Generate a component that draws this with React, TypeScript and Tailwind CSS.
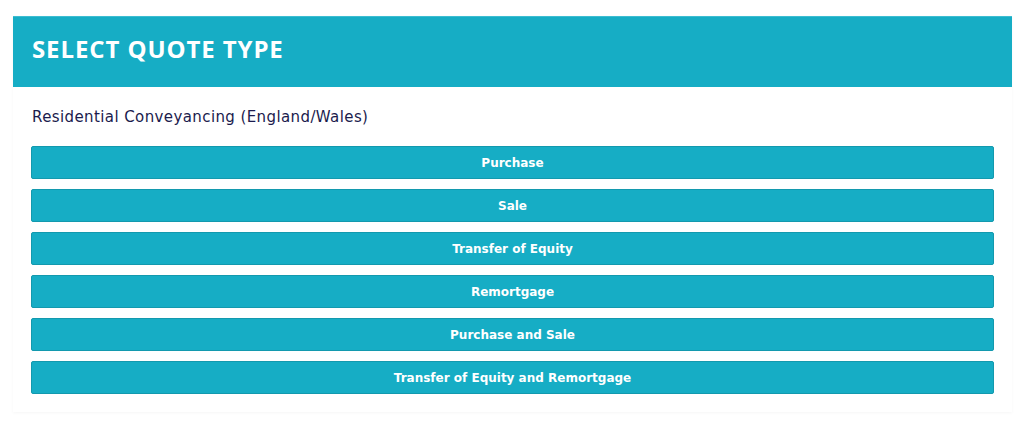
const quoteTypes = [
  'Purchase',
  'Sale',
  'Transfer of Equity',
  'Remortgage',
  'Purchase and Sale',
  'Transfer of Equity and Remortgage',
];

export default function App() {
  return (
    <div className="min-h-[427px] bg-white pt-[16px] px-[12px]">
      <div className="w-[999px] ml-[1px] bg-white shadow-[0_1px_3px_rgba(0,0,0,0.04)]">
        <div className="h-[71px] bg-[#16adc5] border-t border-[#3dbdd1] flex items-center pl-[19px] pb-[6px]">
          <h1 className="text-white text-[24px] font-bold tracking-[0.9px] font-['Open_Sans',sans-serif]">
            SELECT QUOTE TYPE
          </h1>
        </div>
        <div className="px-[18px] pb-[18px]">
          <p className="h-[59px] flex items-center pl-[1px] pt-[2px] text-[15px] tracking-[0.4px] text-[#1b1b4d] font-['DejaVu_Sans',sans-serif]">
            Residential Conveyancing (England/Wales)
          </p>
          <div className="flex flex-col gap-[10px]">
            {quoteTypes.map((label) => (
              <button
                key={label}
                className="h-[33px] w-full bg-[#16adc5] border border-[#1399ae] rounded-[2px] text-white text-[12px] font-bold font-['DejaVu_Sans',sans-serif]"
              >
                {label}
              </button>
            ))}
          </div>
        </div>
      </div>
    </div>
  );
}
